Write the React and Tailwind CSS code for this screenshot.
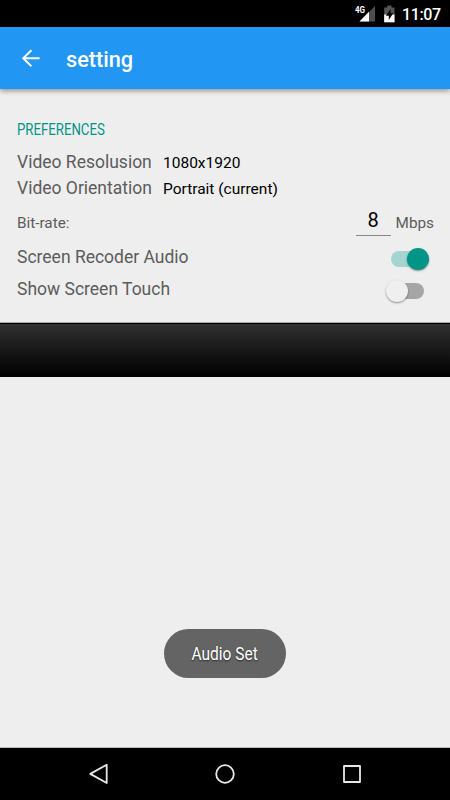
function StatusBar() {
  return (
    <div className="flex h-[27px] shrink-0 bg-black text-white">
      <svg className="h-[27px] w-[110px] ml-auto shrink-0" viewBox="0 0 110 27">
        <path d="M35 6V21.5H19.5Z" fill="#4d4d4d" />
        <path d="M29 11.8V21.5H19.5Z" fill="#fff" />
        <text x="15" y="13" fill="#fff" fontSize="9.5" fontWeight="700" fontFamily="Roboto, sans-serif" textLength="10" lengthAdjust="spacingAndGlyphs">4G</text>
        <path d="M44.2 7.4H47.2V5.6H51.5V7.4H54.5V22H44.2Z" fill="#555" />
        <path d="M44.2 14.5H54.5V22.3H44.2Z" fill="#fff" />
        <path d="M50.6 9L45.8 15.8H48.8V20L53.2 13.2H50.6Z" fill="#000" />
        <text x="62" y="20" fill="#fff" fontSize="16" fontWeight="500" fontFamily="Roboto, sans-serif" textLength="39">11:07</text>
      </svg>
    </div>
  );
}

function Label({ children, className = "" }) {
  return <span className={"whitespace-nowrap text-[17.5px] leading-[20px] text-[#5c5c5c] " + className}>{children}</span>;
}

export default function App() {
  return (
    <div className="flex h-[800px] w-[450px] flex-col overflow-hidden bg-[#eeeeee] font-['Roboto',sans-serif]">
      <StatusBar />
      <header className="z-10 flex h-[62px] shrink-0 items-center bg-[#2196f3] pl-[21px] text-white shadow-[0_2px_5px_rgba(0,0,0,0.38)]">
        <svg className="h-5 w-5" viewBox="0 0 20 20" fill="none" stroke="currentColor" strokeWidth="1.9">
          <path d="M10.4 2.2L2.2 10.2L10.4 18.2M2 10.2H18.6" />
        </svg>
        <h1 className="ml-[25px] pt-[4px] text-[21.7px] leading-[30px] font-medium">setting</h1>
      </header>

      <main className="h-[233px] shrink-0 pt-[28px] pr-[16px] pl-[17px]">
        <div className="h-[32px]">
          <h2 className="inline-block origin-left scale-x-[0.825] text-[16px] leading-[26px] text-[#009587]">PREFERENCES</h2>
        </div>
        <div className="flex h-[26px] items-center">
          <Label className="w-[146px]">Video Resolusion</Label>
          <span className="pt-[1px] text-[15.5px] leading-[20px] text-black">1080x1920</span>
        </div>
        <div className="flex h-[26px] items-center">
          <Label className="w-[146px]">Video Orientation</Label>
          <span className="pt-[1px] text-[15.5px] leading-[20px] text-black">Portrait (current)</span>
        </div>
        <div className="flex h-[44px] items-center text-[15.3px] text-[#5c5c5c]">
          <span>Bit-rate:</span>
          <span className="mb-[1px] ml-auto h-[26px] w-[35px] border-b border-[#888] text-center text-[20px] leading-[20px] text-black">8</span>
          <span className="ml-[5px]">Mbps</span>
        </div>
        <div className="flex h-[24px] items-center">
          <Label>Screen Recoder Audio</Label>
          <div className="mt-[4px] mr-[5px] ml-auto flex h-4 w-[38px] items-center justify-end rounded-full bg-[#a4d5d0]">
            <div className="h-[22px] w-[22px] shrink-0 rounded-full bg-[#009587] shadow-[0_1px_2px_rgba(0,0,0,0.4)]" />
          </div>
        </div>
        <div className="flex h-[40px] items-center">
          <Label>Show Screen Touch</Label>
          <div className="mt-[4px] mr-[10px] ml-auto flex h-4 w-[38px] items-center rounded-full bg-[linear-gradient(90deg,transparent_11px,#a5a5a5_11px)]">
            <div className="h-[22px] w-[22px] shrink-0 rounded-full bg-[#efefef] shadow-[0_1px_2px_rgba(0,0,0,0.4)]" />
          </div>
        </div>
      </main>

      <div className="h-[55px] shrink-0 border-t border-[#aaa] bg-black pt-px">
        <div className="h-[52px] bg-[linear-gradient(180deg,#303030,#000)]" />
      </div>

      <div className="flex flex-1 items-end justify-center border-b border-[#bbb] pb-[69px]">
        <div className="flex h-[49px] w-[122px] items-center justify-center rounded-full bg-[#646464] text-[18px] text-white">
          <span className="inline-block scale-x-[0.86] pr-[2px] whitespace-nowrap [text-shadow:0_1px_2px_rgba(0,0,0,0.6)]">Audio Set</span>
        </div>
      </div>

      <nav className="flex h-[52px] shrink-0 items-center bg-black">
        <svg className="h-[52px] w-[450px]" viewBox="0 0 450 52" fill="none" stroke="#e8e8e8" strokeWidth="1.8" strokeLinejoin="round">
          <path d="M90.3 25.9L106.7 16.8V35Z" />
          <circle cx="225" cy="26" r="8.8" />
          <path d="M344 18H360V34H344Z" />
        </svg>
      </nav>
    </div>
  );
}
